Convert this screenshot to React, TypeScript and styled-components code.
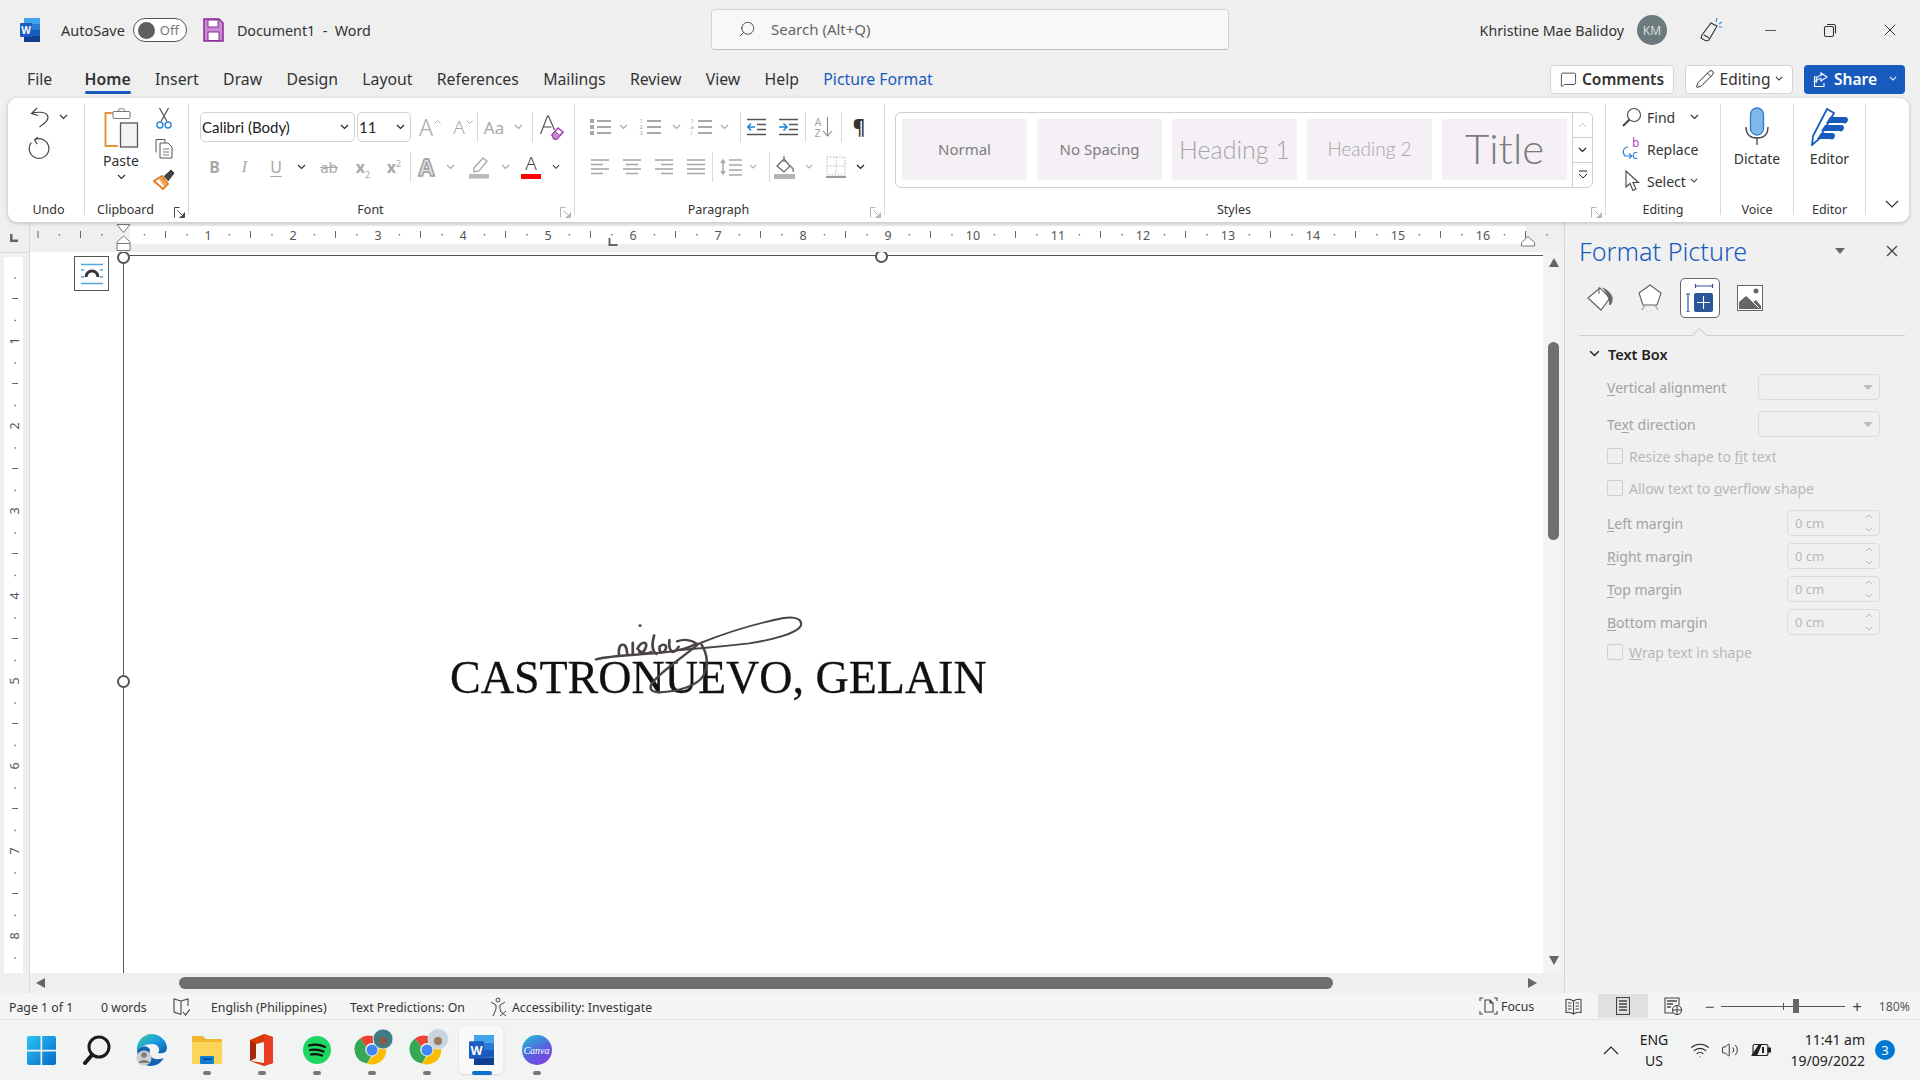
import React from 'react';
import styled, { createGlobalStyle } from 'styled-components';
import { Search, X, Minus, Pencil, MessageSquare, Wifi, Volume2 } from 'lucide-react';

const UI = `"Noto Sans", "Open Sans", Arial, sans-serif`;
const BLUE = '#185abd';
const DIM = '#a8a8a8';

const GlobalStyle = createGlobalStyle`
	html, body {
		margin: 0;
		width: 1920px;
		height: 1080px;
		overflow: hidden;
	}
	#root {
		width: 1920px;
		height: 1080px;
	}
`;

const Chev = ({ size = 9 }: { size?: number }) => (
	<svg width={size} height={size * 0.67} viewBox="0 0 9 6" fill="none" stroke="currentColor" strokeWidth="1.2">
		<path d="M1 1l3.5 3.5L8 1" />
	</svg>
);

const Launcher = ({ dark }: { dark?: boolean }) => (
	<LauncherBox $dark={dark}>
		<svg width="11" height="11" viewBox="0 0 11 11" fill="none" stroke="currentColor" strokeWidth="1">
			<path d="M.5 10.500V.5h5M10.500 5.500v5h-5M3.500 3.500l6 6M6.500 9.500h3v-3" />
		</svg>
	</LauncherBox>
);

const LinesIcon = ({ kind }: { kind: 'left' | 'center' | 'right' | 'justify' }) => {
	const rows = {
		left: [[1, 19], [1, 13], [1, 19], [1, 13]],
		center: [[1, 19], [4, 16], [1, 19], [4, 16]],
		right: [[1, 19], [7, 19], [1, 19], [7, 19]],
		justify: [[1, 19], [1, 19], [1, 19], [1, 19]],
	}[kind];
	return (
		<svg width="20" height="18" viewBox="0 0 20 18" stroke={DIM} strokeWidth="1.6">
			{rows.map((r, i) => (
				<line key={i} x1={r[0]} x2={r[1]} y1={2 + i * 4.5} y2={2 + i * 4.5} />
			))}
		</svg>
	);
};

const ListIcon = ({ marks }: { marks: string[] }) => (
	<ListGrid>
		{marks.map((m, i) => (
			<React.Fragment key={i}>
				<ListMark $square={m === ''}>{m}</ListMark>
				<ListBar />
			</React.Fragment>
		))}
	</ListGrid>
);

const IndentIcon = ({ out }: { out?: boolean }) => (
	<svg width="20" height="18" viewBox="0 0 20 18" fill="none">
		<path d="M0 1.500h19M10 6.500h9M10 11.500h9M0 16.500h19" stroke="#555" strokeWidth="1.5" />
		<path d={out ? 'M8 9H1M4 5.500L.8 9 4 12.500' : 'M0 9h7M4.500 5.500L8 9l-3.500 3.500'} stroke="#1a86d0" strokeWidth="1.5" />
	</svg>
);

const WordLogo = ({ w = 20, h = 24 }: { w?: number; h?: number }) => (
	<svg width={w} height={h} viewBox="0 0 20 24">
		<rect x="4" y="0" width="16" height="6" fill="#41a5ee" />
		<rect x="4" y="6" width="16" height="6" fill="#2b7cd3" />
		<rect x="4" y="12" width="16" height="6" fill="#185abd" />
		<rect x="4" y="18" width="16" height="6" fill="#103f91" />
		<rect x="0" y="5" width="12" height="14" rx="1" fill="#1a5cc0" />
		<text x="6" y="16" fontSize="10" fontWeight="700" fill="#fff" textAnchor="middle" fontFamily={UI}>W</text>
	</svg>
);

const Signature = () => (
	<SignatureSvg viewBox="0 0 1568 390" preserveAspectRatio="none" fill="none" stroke="#4a4442" strokeLinecap="round" strokeLinejoin="round">
		<path strokeWidth="7" d="M460 208C500 196 560 196 630 188C665 184 700 178 722 160C710 150 690 146 672 154" />
		<path strokeWidth="5.500" d="M735 158C800 128 880 100 950 84C985 78 1000 90 995 108C985 130 920 150 860 160C815 166 780 170 740 174C720 176 700 178 680 180" />
		<path strokeWidth="6.500" d="M735 162C750 190 755 225 740 258C725 285 680 305 625 307C600 306 596 292 612 272C640 235 695 195 730 160" />
		<path strokeWidth="7" d="M520 194C518 175 522 164 530 164C540 164 540 180 542 194M556 158V194M568 176C580 150 596 156 590 172C585 190 572 192 572 180C580 194 595 192 604 186M612 136C606 160 604 182 618 192M626 170C638 158 648 166 640 182C634 192 624 186 626 172M652 150C650 165 652 180 660 186C666 188 672 176 676 170" />
		<circle cx="575" cy="107" r="4" fill="#4a4442" stroke="none" />
	</SignatureSvg>
);

const HRulerSvg = () => {
	const marks: React.ReactNode[] = [];
	for (let i = -4; i <= 67; i++) {
		const x = 123 + i * 21.25;
		if (i === 0) continue;
		if (i % 4 === 0 && i > 0) {
			marks.push(
				<text key={i} x={x} y="240" fontSize="12.5" textAnchor="middle" fill="#555" fontFamily={UI}>{i / 4}</text>,
			);
		} else if (i % 2 === 0) {
			marks.push(<line key={i} x1={x} x2={x} y1="231" y2="238" stroke="#666" />);
		} else {
			marks.push(<rect key={i} x={x - 0.5} y="234" width="1.4" height="1.4" fill="#666" />);
		}
	}
	return (
		<svg width="1534" height="30" viewBox="30 222 1534 30">
			<rect x="130" y="226" width="1396" height="18" fill="#fff" />
			{marks}
			<path d="M117 224.500h13l-6.500 8zM123.500 236l6.500 6v8.500h-13V242zM117 243.500h13" fill="#fff" stroke="#777" />
			<path d="M1528 236.500l6.500 6v3.500h-13v-3.500z" fill="#fff" stroke="#777" />
			<path d="M609.500 238v7h8" fill="none" stroke="#666" strokeWidth="2" />
		</svg>
	);
};

const VRulerSvg = () => {
	const marks: React.ReactNode[] = [];
	for (let i = 1; i <= 33; i++) {
		const y = 256 + i * 21.25;
		if (i % 4 === 0) {
			marks.push(
				<text key={i} x="14.500" y={y} fontSize="12.5" textAnchor="middle" dominantBaseline="central" fill="#555" fontFamily={UI} transform={`rotate(-90 14.5 ${y})`}>{i / 4}</text>,
			);
		} else if (i % 2 === 0) {
			marks.push(<line key={i} x1="12" x2="18" y1={y} y2={y} stroke="#666" />);
		} else {
			marks.push(<rect key={i} x="14.500" y={y} width="1.4" height="1.4" fill="#666" />);
		}
	}
	return (
		<svg width="29" height="721" viewBox="0 252 29 721">
			<rect x="4" y="257" width="19" height="716" fill="#fff" />
			{marks}
		</svg>
	);
};

const SpinBox = ({ value = '0 cm' }: { value?: string }) => (
	<Spin>
		<span>{value}</span>
		<SpinArrows>
			<svg width="8" height="22" viewBox="0 0 8 22" fill="none" stroke="#b5b5b5">
				<path d="M1 6l3-3 3 3M1 16l3 3 3-3" />
			</svg>
		</SpinArrows>
	</Spin>
);

const CaretMark = ({ down }: { down?: boolean }) => (
	<CaretBox width="7" height="4" viewBox="0 0 7 4" fill="none" stroke={DIM}>
		<path d={down ? 'M.5.5l3 3 3-3' : 'M.5 3.500l3-3 3 3'} />
	</CaretBox>
);

const ChromeMark = ({ tint, face }: { tint: string; face: string }) => (
	<svg width="28" height="28" viewBox="0 0 28 28" overflow="visible">
		<path d="M14 0a14 14 0 0 1 12 7H14a7 7 0 0 0-6 3.500L2 2.500A14 14 0 0 1 14 0z" fill="#ea4335" />
		<path d="M2 2.500l6 8a7 7 0 0 0 5 10L9 27.500A14 14 0 0 1 2 2.500z" fill="#34a853" />
		<path d="M26 7a14 14 0 0 1-17 20.500l5-7a7 7 0 0 0 6-10z" fill="#fbbc04" />
		<circle cx="14" cy="14" r="5.500" fill="#4285f4" />
		<circle cx="25" cy="3" r="10" fill={tint} stroke="#d5e2ea" />
		<circle cx="25" cy="5" r="4" fill={face} />
	</svg>
);

const tabs = ['File', 'Home', 'Insert', 'Draw', 'Design', 'Layout', 'References', 'Mailings', 'Review', 'View', 'Help'];

export default function App() {
	return (
		<>
			<GlobalStyle />
			<Page>
				<TitleBar>
					<TitleLeft>
						<WordLogo />
						<AutoSave>AutoSave</AutoSave>
						<Toggle>
							<ToggleKnob />
							<span>Off</span>
						</Toggle>
						<SaveIcon width="21" height="24" viewBox="0 0 21 24">
							<path d="M1 1h15l4 4v18H1z" fill="#c98bd0" stroke="#8a2d96" strokeWidth="1.5" />
							<rect x="5" y="2" width="10" height="7" fill="#fff" stroke="#8a2d96" />
							<rect x="5" y="14" width="11" height="8.500" fill="#fff" stroke="#8a2d96" />
						</SaveIcon>
						<DocName>Document1&nbsp; -&nbsp; Word</DocName>
					</TitleLeft>
					<SearchBox>
						<SearchGlyph><Search size={18} strokeWidth={1.2} color="#444" /></SearchGlyph>
						<span>Search (Alt+Q)</span>
					</SearchBox>
					<TitleRight>
						<UserName>Khristine Mae Balidoy</UserName>
						<Avatar>KM</Avatar>
						<CoachIcon width="24" height="28" viewBox="0 0 24 28" fill="none" stroke="#333" strokeWidth="1.1">
							<path d="M12 7l6 3-8 14-3 1-5-3 1-3z" />
							<path d="M5 19l5 3" />
							<path d="M17 6l1-4M20 8l3-2M20 11h3" stroke="#2b88d8" />
						</CoachIcon>
						<WinBtn><Minus size={17} strokeWidth={1.2} /></WinBtn>
						<WinBtn>
							<svg width="16" height="16" viewBox="0 0 16 16" fill="none" stroke="#333" strokeWidth="1.1">
								<rect x="2.500" y="4.500" width="9" height="10" rx="1.500" />
								<path d="M5 2.500h6.500a2 2 0 0 1 2 2v7" />
							</svg>
						</WinBtn>
						<WinBtn><X size={20} strokeWidth={1.2} /></WinBtn>
					</TitleRight>
				</TitleBar>

				<TabRow>
					{tabs.map((t) => (
						<Tab key={t} $active={t === 'Home'} $file={t === 'File'}>{t}</Tab>
					))}
					<Tab $context>Picture Format</Tab>
					<TabActions>
						<PillButton $w={124}>
							<MessageSquare size={17} strokeWidth={1.2} />
							<strong>Comments</strong>
						</PillButton>
						<PillButton $w={108}>
							<Pencil size={20} strokeWidth={1.2} />
							<span>Editing</span>
							<Chev size={8} />
						</PillButton>
						<ShareButton>
							<ShareMain>
								<svg width="16" height="17" viewBox="0 0 16 17" fill="none" stroke="#fff" strokeWidth="1.1">
									<path d="M8 2l6 4-6 4V7.500C5 7.500 3.500 9 3 12 2.500 8 4 4.500 8 4.500z" />
									<path d="M11 12v3.500H1.500V6H4" />
								</svg>
								<strong>Share</strong>
							</ShareMain>
							<Chev size={8} />
						</ShareButton>
					</TabActions>
				</TabRow>

				<Ribbon>
					<Group $w={77}>
						<GroupBody>
							<UndoRow>
								<Slot $w={24} $c="#444">
									<svg width="20" height="21" viewBox="0 0 20 21" fill="none" stroke="#444" strokeWidth="1.2">
										<path d="M7 1L1.500 6.500 8 8.500M1.500 6.500C6 5 15 4 17.500 8.500c2 4-2 7-8 11.500" />
									</svg>
								</Slot>
								<Slot $w={22} $c="#333"><Chev /></Slot>
							</UndoRow>
							<UndoRow $second>
								<Slot $w={24}>
									<svg width="24" height="24" viewBox="0 0 22 22" fill="none" stroke="#444" strokeWidth="1.1">
										<path d="M6 3.500A9 9 0 1 1 3 6M9 1L6 3.500 8.500 7.500" />
									</svg>
								</Slot>
							</UndoRow>
						</GroupBody>
						<GroupLabel $shift={5}>Undo</GroupLabel>
					</Group>

					<Group $w={104}>
						<ClipBody>
							<PasteCol>
								<svg width="35" height="40" viewBox="0 0 35 40" fill="none">
									<path d="M10 5H1.500v33H14" stroke="#e8963a" strokeWidth="2" />
									<path d="M27 5h-3V9" stroke="#e8963a" strokeWidth="1" />
									<rect x="9" y="3.500" width="17" height="7" rx="1" fill="#fff" stroke="#777" />
									<path d="M14 3.500a3.500 3 0 0 1 7 0" stroke="#777" />
									<rect x="16.500" y="15" width="17" height="24" fill="#f3f3f3" stroke="#555" strokeWidth="1.3" />
								</svg>
								<PasteLabel>Paste</PasteLabel>
								<Chev />
							</PasteCol>
							<ClipCol>
								<svg width="16" height="22" viewBox="0 0 16 22" fill="none" stroke="#444" strokeWidth="1.100">
									<path d="M5 14.500L12.500 1M11 14.500L3.500 1" />
									<circle cx="4" cy="18" r="3" stroke="#2b88d8" strokeWidth="1.400" />
									<circle cx="12" cy="18" r="3" stroke="#2b88d8" strokeWidth="1.400" />
								</svg>
								<svg width="20" height="21" viewBox="0 0 20 21" fill="none" stroke="#555">
									<path d="M2 14.500V1.500h9v3" />
									<path d="M6 5h8l4 4v11H6z" fill="#fff" />
									<path d="M9 11h6M9 14h6M9 17h6" stroke="#777" />
								</svg>
								<svg width="22" height="22" viewBox="0 0 22 22" fill="none">
									<path d="M1 13l8-5 6 8-5 5C7 18 4 16 1 13z" fill="#fff" stroke="#e27a1c" strokeWidth="1.800" />
									<path d="M6 11l3-2 5 7-3 2z" fill="#f0a050" />
									<path d="M11 8.500l7-6.500 3 3-6 8" fill="#444" stroke="#333" />
								</svg>
							</ClipCol>
						</ClipBody>
						<GroupLabel $launcher>Clipboard</GroupLabel>
						<Launcher dark />
					</Group>

					<Group $w={386}>
						<FontBody>
							<FontRow>
								<Combo $w={155}>
									<ComboText>Calibri (Body)</ComboText>
									<Chev />
								</Combo>
								<Combo $w={54} $gap>
									<ComboText>11</ComboText>
									<Chev />
								</Combo>
								<Slot $w={38}><BigA>A</BigA><CaretMark /></Slot>
								<Slot $w={28}><BigA $small>A</BigA><CaretMark down /></Slot>
								<Rule />
								<Slot $w={32}><CaseA>Aa</CaseA></Slot>
								<Slot $w={16} $c={DIM}><Chev /></Slot>
								<Slot $w={6} />
								<Rule />
								<Slot $w={38}>
									<svg width="26" height="26" viewBox="0 0 26 26" fill="none">
										<path d="M1.500 20L8.500 2h1l6 14M4.500 13h8" stroke="#444" strokeWidth="1.100" />
										<path d="M13 21l6-7 5 4-6 7h-3z" fill="#fff" stroke="#9c3fb0" strokeWidth="1.600" />
										<path d="M13 21l3-3.500 5 4-3 3.500h-3z" fill="#c98bd0" stroke="#9c3fb0" />
									</svg>
								</Slot>
							</FontRow>
							<FontRow $second>
								<Slot $w={29}><Glyph $bold>B</Glyph></Slot>
								<Slot $w={31}><Glyph $italic>I</Glyph></Slot>
								<Slot $w={32}><Glyph $under>U</Glyph></Slot>
								<Slot $w={18} $c="#333"><Chev /></Slot>
								<Slot $w={38}><Strike>ab</Strike></Slot>
								<Slot $w={30}><Glyph $bold>x<ScriptNum $low>2</ScriptNum></Glyph></Slot>
								<Slot $w={32}><Glyph $bold>x<ScriptNum>2</ScriptNum></Glyph></Slot>
								<Rule />
								<Slot $w={31}><OutlineA>A</OutlineA></Slot>
								<Slot $w={16} $c={DIM}><Chev /></Slot>
								<Slot $w={42}>
									<svg width="22" height="23" viewBox="0 0 22 23" fill="none" stroke={DIM} strokeWidth="1.300">
										<path d="M6 12L15 2l4 3-8 10-5 1z" />
										<rect x="1" y="18" width="20" height="4.500" fill="#b9b9b9" stroke="none" />
									</svg>
								</Slot>
								<Slot $w={10} $c={DIM}><Chev /></Slot>
								<Slot $w={42}>
									<RedA>A</RedA>
								</Slot>
								<Slot $w={8} $c="#333"><Chev /></Slot>
							</FontRow>
						</FontBody>
						<GroupLabel $launcher>Font</GroupLabel>
						<Launcher />
					</Group>

					<Group $w={310}>
						<ParaBody>
							<FontRow>
								<Slot $w={30}><ListIcon marks={['', '', '']} /></Slot>
								<Slot $w={16} $c={DIM}><Chev /></Slot>
								<Slot $w={38}><ListIcon marks={['1', '2', '3']} /></Slot>
								<Slot $w={14} $c={DIM}><Chev /></Slot>
								<Slot $w={36}><ListIcon marks={['1', 'a', 'i']} /></Slot>
								<Slot $w={10} $c={DIM}><Chev /></Slot>
								<Slot $w={11} />
								<Rule />
								<Slot $w={32}><IndentIcon out /></Slot>
								<Slot $w={32}><IndentIcon /></Slot>
								<Rule />
								<Slot $w={35}>
									<SortLetters><span>A</span><span>Z</span></SortLetters>
									<svg width="11" height="22" viewBox="0 0 11 22" fill="none">
										<path d="M5.500 1v19M1 15l4.500 5 4.500-5" stroke="#888" strokeWidth="1.100" />
									</svg>
								</Slot>
								<Rule />
								<Slot $w={34}><Pilcrow>¶</Pilcrow></Slot>
							</FontRow>
							<FontRow $second>
								<Slot $w={30}><LinesIcon kind="left" /></Slot>
								<Slot $w={34}><LinesIcon kind="center" /></Slot>
								<Slot $w={30}><LinesIcon kind="right" /></Slot>
								<Slot $w={33}><LinesIcon kind="justify" /></Slot>
								<Rule />
								<Slot $w={36}>
									<svg width="23" height="20" viewBox="0 0 23 20" fill="none" stroke={DIM} strokeWidth="1.500">
										<path d="M3 4v12M1 6l2-3 2 3M1 14l2 3 2-3M9 3h13M9 8h13M9 13h13M9 18h13" />
									</svg>
								</Slot>
								<Slot $w={8} $c={DIM}><Chev size={8} /></Slot>
								<Slot $w={12} />
								<Rule />
								<Slot $w={30}>
									<svg width="22" height="24" viewBox="0 0 22 24" fill="none">
										<path d="M3 11l7-7 6 7-6 6z" stroke="#666" strokeWidth="1.200" fill="#fff" />
										<path d="M10 1v6M16 11c3 2 4 4 3 6" stroke="#888" strokeWidth="1.600" />
										<rect x="0" y="19" width="21" height="5" fill="#b5b5b5" />
									</svg>
								</Slot>
								<Slot $w={18} $c={DIM}><Chev size={8} /></Slot>
								<Slot $w={36}>
									<svg width="20" height="23" viewBox="0 0 20 23" fill="none" stroke="#b5b5b5" strokeWidth="1" strokeDasharray="1.500 1.500">
										<rect x="1" y="1" width="18" height="18" />
										<path d="M10 1v18M1 10h18" />
										<rect x="0" y="20" width="20" height="2" fill="#9a9a9a" stroke="none" />
									</svg>
								</Slot>
								<Slot $w={12} $c="#222"><Chev /></Slot>
							</FontRow>
						</ParaBody>
						<GroupLabel $launcher>Paragraph</GroupLabel>
						<Launcher />
					</Group>

					<Group $w={721}>
						<StylesBody>
							<Gallery>
								<StyleItem $size={15}>Normal</StyleItem>
								<StyleItem $size={15}>No Spacing</StyleItem>
								<StyleItem $size={25} $light>Heading 1</StyleItem>
								<StyleItem $size={19} $light>Heading 2</StyleItem>
								<StyleItem $size={42} $light $dark>Title</StyleItem>
								<GalleryScroll>
									<ScrollCell $c="#c4c4c4"><svg width="9" height="6" viewBox="0 0 9 6" fill="none" stroke="currentColor"><path d="M1 5l3.500-3.500L8 5" /></svg></ScrollCell>
									<ScrollCell $c="#222"><Chev /></ScrollCell>
									<ScrollCell $c="#222">
										<svg width="10" height="10" viewBox="0 0 10 10" fill="none" stroke="currentColor"><path d="M1 1h8M1 4l4 4 4-4" /></svg>
									</ScrollCell>
								</GalleryScroll>
							</Gallery>
						</StylesBody>
						<GroupLabel $launcher>Styles</GroupLabel>
						<Launcher />
					</Group>

					<Group $w={115}>
						<EditBody>
							<EditRow>
								<Slot $w={22}>
									<svg width="20" height="20" viewBox="0 0 20 20" fill="none" stroke="#444" strokeWidth="1.100">
										<circle cx="12" cy="8" r="6.500" />
										<path d="M7.500 12.500L1 19" strokeWidth="2" />
									</svg>
								</Slot>
								<EditText>Find</EditText>
								<EditChev $gap={15}><Chev /></EditChev>
							</EditRow>
							<EditRow>
								<Slot $w={22}>
									<ReplaceMark>
										<ReplaceB>b</ReplaceB>
										<ReplaceC>c</ReplaceC>
										<svg width="14" height="14" viewBox="0 0 14 14" fill="none" stroke="#2b88d8" strokeWidth="1.100">
											<path d="M6 1C1 1 0 7 3 10h7M7 7.500l3 2.500-3 2.500" />
										</svg>
									</ReplaceMark>
								</Slot>
								<EditText>Replace</EditText>
							</EditRow>
							<EditRow>
								<Slot $w={22}>
									<svg width="16" height="22" viewBox="0 0 16 22" fill="#fff" stroke="#444" strokeWidth="1.100">
										<path d="M2 1v16l4-3.500 3 7 3-1.500-3-6.500h5.500z" />
									</svg>
								</Slot>
								<EditText>Select</EditText>
								<EditChev $gap={4}><Chev size={8} /></EditChev>
							</EditRow>
						</EditBody>
						<GroupLabel>Editing</GroupLabel>
					</Group>

					<Group $w={73}>
						<BigBody>
							<svg width="24" height="39" viewBox="0 0 24 39" fill="none">
								<rect x="5.500" y="1" width="13" height="27" rx="6.500" fill="#7fb9e8" stroke="#2b7cd3" strokeWidth="1.300" />
								<path d="M1 20c0 7 4 11 11 11s11-4 11-11" stroke="#444" strokeWidth="1.300" />
								<path d="M12 31v7" stroke="#444" strokeWidth="1.300" />
							</svg>
							<BigLabel>Dictate</BigLabel>
						</BigBody>
						<GroupLabel>Voice</GroupLabel>
					</Group>

					<Group $w={72}>
						<BigBody>
							<svg width="40" height="39" viewBox="0 0 40 39" fill="none">
								<path d="M17 2l7 4L9 32l-7 6 1-9z" fill="#fff" stroke={BLUE} strokeWidth="1.800" />
								<path d="M20 10h16a3 3 0 0 1-3 6H16zM15 18h17a3 3 0 0 1-3 6H11zM11 26h12a3 3 0 0 1-3 6H7z" fill={BLUE} />
							</svg>
							<BigLabel>Editor</BigLabel>
						</BigBody>
						<GroupLabel>Editor</GroupLabel>
					</Group>

					<Collapse>
						<svg width="14" height="9" viewBox="0 0 14 9" fill="none" stroke="#333" strokeWidth="1.200">
							<path d="M1 1l6 6 6-6" />
						</svg>
					</Collapse>
				</Ribbon>

				<Workspace>
					<DocColumn>
						<RulerRow>
							<RulerCorner>
								<svg width="8" height="8" viewBox="0 0 8 8" fill="none" stroke="#666" strokeWidth="2.500">
									<path d="M1.250 0v6.750H8" />
								</svg>
							</RulerCorner>
							<HRulerSvg />
						</RulerRow>
						<DocBody>
							<VRulerCol><VRulerSvg /></VRulerCol>
							<DocPage>
								<FrameTop />
								<FrameLeft />
								<Handle $x={93} $y={4} />
								<Handle $x={851} $y={3} />
								<Handle $x={93} $y={428} />
								<LayoutButton>
									<svg width="22" height="22" viewBox="0 0 22 22">
										<path d="M0 1.500h22M0 20.500h22M0 7h3M19 7h3M0 14h3M19 14h3" stroke="#55a7dc" strokeWidth="1.600" />
										<path d="M5 14a6 6 0 0 1 12 0" fill="none" stroke="#333" strokeWidth="3" />
									</svg>
								</LayoutButton>
								<SignedName>CASTRONUEVO, GELAIN</SignedName>
								<Signature />
							</DocPage>
							<VScroll>
								<ArrowUp />
								<VThumb />
								<ArrowDown />
							</VScroll>
						</DocBody>
						<HScroll>
							<HScrollLead>
								<ArrowLeft />
							</HScrollLead>
							<HThumb />
							<ArrowRight />
						</HScroll>
					</DocColumn>

					<Panel>
						<PanelHead>
							<PanelTitle>Format Picture</PanelTitle>
							<PanelMenu />
							<PanelClose><X size={18} strokeWidth={1.800} color="#444" /></PanelClose>
						</PanelHead>
						<PanelTabs>
							<PanelTab>
								<svg width="27" height="27" viewBox="0 0 27 27" fill="none">
									<path d="M1 13L13 3l10 10-9 12z" fill="#fff" stroke="#666" strokeWidth="1.200" />
									<path d="M12 2v7M16 3c6 3 10 8 9 12 0 2-1 4-2 5-1-3 0-5-3-10" fill="#666" stroke="#666" />
								</svg>
							</PanelTab>
							<PanelTab>
								<svg width="26" height="28" viewBox="0 0 26 28" fill="none" stroke="#666" strokeWidth="1.200">
									<path d="M13 1l11 8-4 12H6L2 9z" fill="#fff" />
									<path d="M5 26c1-3 2-4 4-5h8c2 1 3 2 4 5" stroke="#aaa" strokeWidth="1.400" />
								</svg>
							</PanelTab>
							<PanelTab $active>
								<svg width="28" height="28" viewBox="0 0 28 28" fill="none">
									<path d="M9.500 2h17M9.500 0v4M26.500 0v4M0 10h4M0 28h4M2 10v18" stroke="#2b579a" strokeWidth="1.200" />
									<rect x="8" y="9" width="19" height="19" rx="2" fill="#2b579a" />
									<path d="M17.500 12v13M11 18.500h13" stroke="#fff" strokeWidth="1.100" />
								</svg>
							</PanelTab>
							<PanelTab>
								<svg width="26" height="26" viewBox="0 0 26 26">
									<rect x=".5" y=".5" width="25" height="25" fill="#fff" stroke="#666" />
									<circle cx="19" cy="6" r="2.500" fill="#666" />
									<path d="M2 24V17l7-6 7 6 3-2 5 6v3z" fill="#666" />
									<path d="M10 11l12 12" stroke="#fff" />
								</svg>
							</PanelTab>
							<TabNotch />
						</PanelTabs>
						<SectionHead>
							<Chev size={11} />
							<span>Text Box</span>
						</SectionHead>
						<FormRow $mt={10}>
							<FieldLabel><u>V</u>ertical alignment</FieldLabel>
							<SelectField><SelectCaret /></SelectField>
						</FormRow>
						<FormRow $mt={11}>
							<FieldLabel>Te<u>x</u>t direction</FieldLabel>
							<SelectField><SelectCaret /></SelectField>
						</FormRow>
						<CheckRow $mt={9}>
							<Check />
							<span>Resize shape to <u>f</u>it text</span>
						</CheckRow>
						<CheckRow $mt={12}>
							<Check />
							<span>Allow text to <u>o</u>verflow shape</span>
						</CheckRow>
						<FormRow $mt={12}>
							<FieldLabel><u>L</u>eft margin</FieldLabel>
							<SpinBox />
						</FormRow>
						<FormRow $mt={7}>
							<FieldLabel><u>R</u>ight margin</FieldLabel>
							<SpinBox />
						</FormRow>
						<FormRow $mt={7}>
							<FieldLabel><u>T</u>op margin</FieldLabel>
							<SpinBox />
						</FormRow>
						<FormRow $mt={7}>
							<FieldLabel><u>B</u>ottom margin</FieldLabel>
							<SpinBox />
						</FormRow>
						<CheckRow $mt={7}>
							<Check />
							<span><u>W</u>rap text in shape</span>
						</CheckRow>
					</Panel>
				</Workspace>

				<StatusBar>
					<StatusItem $w={92}>Page 1 of 1</StatusItem>
					<StatusItem $w={71}>0 words</StatusItem>
					<StatusItem $w={39}>
						<svg width="18" height="18" viewBox="0 0 18 18" fill="none" stroke="#444" strokeWidth="1.100">
							<path d="M9 3L2 1v13l7 2.500M9 3l7-2v7M9 3v13.500" />
							<path d="M11 14l2.500 3L18 11" />
						</svg>
					</StatusItem>
					<StatusItem $w={139}>English (Philippines)</StatusItem>
					<StatusItem $w={140}>Text Predictions: On</StatusItem>
					<StatusItem $w={22}>
						<svg width="18" height="20" viewBox="0 0 18 20" fill="none" stroke="#444" strokeWidth="1">
							<circle cx="8" cy="3" r="2" />
							<path d="M1 5l5 3v4l-3 7M15 5l-5 3v4l1 2M10 14l6 5M16 14l-6 5" />
						</svg>
					</StatusItem>
					<StatusItem $w={170}>Accessibility: Investigate</StatusItem>
					<StatusRight>
						<FocusItem>
							<svg width="19" height="18" viewBox="0 0 19 18" fill="none" stroke="#444" strokeWidth="1.100">
								<path d="M1 4V1h3M15 1h3v3M1 14v3h3M15 17h3v-3" />
								<path d="M6 3h5l3 3v9H6zM11 3v3h3" />
							</svg>
							<span>Focus</span>
						</FocusItem>
						<ViewButton>
							<svg width="17" height="17" viewBox="0 0 17 17" fill="none" stroke="#444" strokeWidth="1.100">
								<path d="M8.500 3C6 1 3 1 1 1.500v13c2-.5 5-.5 7.500 1.500 2.500-2 5.500-2 7.500-1.500v-13C14 1 11 1 8.500 3zM8.500 3v13M3 5h3.500M3 8h3.500M3 11h3.500M10.500 5H14M10.500 8H14M10.500 11H14" />
							</svg>
						</ViewButton>
						<ViewButton $active>
							<svg width="14" height="18" viewBox="0 0 14 18" fill="none" stroke="#444" strokeWidth="1.100">
								<rect x=".5" y=".5" width="13" height="17" />
								<path d="M3 4h8M3 7h8M3 10h8M3 13h8" strokeWidth="1.400" />
							</svg>
						</ViewButton>
						<ViewButton>
							<svg width="18" height="18" viewBox="0 0 18 18" fill="none" stroke="#444" strokeWidth="1.100">
								<path d="M9 16H1V1h14v7" />
								<path d="M3 4h10M3 7h6M3 10h4" strokeWidth="1.400" />
								<circle cx="13" cy="13" r="4.500" />
								<path d="M8.500 13h9M13 8.500v9" />
							</svg>
						</ViewButton>
						<ZoomMark $w={23}>−</ZoomMark>
						<ZoomTrack>
							<ZoomTick />
							<ZoomThumb />
						</ZoomTrack>
						<ZoomMark $w={24}>+</ZoomMark>
						<ZoomPct>180%</ZoomPct>
					</StatusRight>
				</StatusBar>

				<Taskbar>
					<TaskSlot>
						<svg width="29" height="29" viewBox="0 0 29 29">
							<defs>
								<linearGradient id="win" x1="0" y1="0" x2="1" y2="1">
									<stop offset="0" stopColor="#2cc4f4" />
									<stop offset="1" stopColor="#0669c9" />
								</linearGradient>
							</defs>
							<path d="M0 2a2 2 0 0 1 2-2h11.500v13.800H0zM15.200 0H27a2 2 0 0 1 2 2v11.800H15.200zM0 15.500h13.500V29H2a2 2 0 0 1-2-2zM15.200 15.500H29V27a2 2 0 0 1-2 2H15.200z" fill="url(#win)" />
						</svg>
					</TaskSlot>
					<TaskSlot>
						<svg width="29" height="30" viewBox="0 0 29 30" fill="none" stroke="#1c1c1c" strokeWidth="3">
							<circle cx="17" cy="12" r="10" />
							<path d="M10 20l-7 8" strokeLinecap="round" strokeWidth="4" />
						</svg>
					</TaskSlot>
					<TaskSlot>
						<svg width="31" height="32" viewBox="0 0 31 32">
							<defs>
								<linearGradient id="edge" x1="0" y1="0" x2="1" y2="1">
									<stop offset="0" stopColor="#3ad08c" />
									<stop offset=".5" stopColor="#1b9de2" />
									<stop offset="1" stopColor="#0c59a4" />
								</linearGradient>
							</defs>
							<path d="M15.500 0C24 0 31 7 31 14c0 5-6 6-9 5 3-4 0-9-6-9C9 10 4 13 1 17 0 8 7 0 15.500 0z" fill="url(#edge)" />
							<path d="M1 17c4-6 11-6 13-1-2 6 3 10 10 9 2 0 4-1 4-1-3 5-8 8-13 8C7 32 2 26 1 17z" fill="#1465b4" />
							<circle cx="8" cy="24" r="7.500" fill="#cfcfcf" />
							<circle cx="8" cy="21" r="2.800" fill="#7e7e7e" />
							<path d="M2.500 29c1-4 10-4 11 0z" fill="#7e7e7e" />
						</svg>
					</TaskSlot>
					<TaskSlot $dot>
						<svg width="30" height="30" viewBox="0 0 30 30">
							<path d="M0 2a1 1 0 0 1 1-1h10l3 3h15a1 1 0 0 1 1 1v4H0z" fill="#f2b72e" />
							<path d="M0 7h30v21a1 1 0 0 1-1 1H1a1 1 0 0 1-1-1z" fill="#fdd55a" />
							<rect x="8" y="21" width="14" height="8" rx="1" fill="#0f7fd3" />
							<rect x="11" y="23.500" width="8" height="1.500" fill="#083f78" />
						</svg>
					</TaskSlot>
					<TaskSlot $dot>
						<OfficeSvg width="24" height="32" viewBox="0 0 24 32">
							<path d="M1 6L15 0l9 3v26l-9 3-14-5 14 2V8L7 10v14l-6 3z" fill="#d83b01" />
							<path d="M15 0l9 3v26l-9 3z" fill="#ea3e23" />
							<path d="M1 27V6l6 4v14z" fill="#a5290f" />
						</OfficeSvg>
					</TaskSlot>
					<TaskSlot $dot>
						<svg width="28" height="28" viewBox="0 0 28 28" fill="none">
							<circle cx="14" cy="14" r="14" fill="#1ed760" />
							<path d="M6 9.500c6-1.500 11-1 16 1.500M7 14c5-1 9-.5 13.500 1.500M8 18.500c4-.8 7.500-.5 11 1" stroke="#111" strokeWidth="2.200" strokeLinecap="round" />
						</svg>
					</TaskSlot>
					<TaskSlot $dot>
						<ChromeMark tint="#3f7d86" face="#8c5a4a" />
					</TaskSlot>
					<TaskSlot $dot>
						<ChromeMark tint="#c8d3e0" face="#9a7a5c" />
					</TaskSlot>
					<TaskSlot $active>
						<WordLogo w={29} h={30} />
					</TaskSlot>
					<TaskSlot $dot>
						<CanvaBadge>Canva</CanvaBadge>
					</TaskSlot>
					<Tray>
						<TraySlot $w={42}>
							<svg width="16" height="9" viewBox="0 0 16 9" fill="none" stroke="#222" strokeWidth="1.100">
								<path d="M1 8l7-7 7 7" />
							</svg>
						</TraySlot>
						<LangBlock>ENG<br />US</LangBlock>
						<TraySlot $w={30} $ml={9}><Wifi size={20} strokeWidth={1.300} color="#222" /></TraySlot>
						<TraySlot $w={30}><Volume2 size={18} strokeWidth={1.200} color="#222" /></TraySlot>
						<TraySlot $w={30}>
							<svg width="21" height="14" viewBox="0 0 21 14" fill="none" stroke="#222" strokeWidth="1.100">
								<rect x="3" y="1.500" width="15" height="11" rx="2" />
								<path d="M18 5h2.500v4H18z" fill="#222" />
								<path d="M1 13L9 1h3L7 13z" fill="#222" stroke="none" />
								<path d="M13 4v6" strokeWidth="2" />
							</svg>
						</TraySlot>
						<Clock>
							<span>11:41 am</span>
							<span>19/09/2022</span>
						</Clock>
						<NotifyBadge>3</NotifyBadge>
					</Tray>
				</Taskbar>
			</Page>
		</>
	);
}

const Page = styled.div`
	width: 1920px;
	height: 1080px;
	display: flex;
	flex-direction: column;
	overflow: hidden;
	background: #efefef;
	font-family: ${UI};
	color: #333;
`;

const TitleBar = styled.div`
	display: flex;
	align-items: center;
	height: 60px;
	flex: none;
`;

const TitleLeft = styled.div`
	display: flex;
	align-items: center;
	width: 711px;
	padding-left: 20px;
	box-sizing: border-box;
`;

const AutoSave = styled.span`
	margin-left: 21px;
	font-size: 14.5px;
`;

const Toggle = styled.div`
	display: flex;
	align-items: center;
	justify-content: space-between;
	width: 54px;
	height: 24px;
	margin-left: 8px;
	padding: 0 7px 0 4px;
	box-sizing: border-box;
	border: 1px solid #555;
	border-radius: 12px;
	background: #fff;
	font-size: 13px;
	color: #777;
`;

const ToggleKnob = styled.span`
	width: 17px;
	height: 17px;
	border-radius: 50%;
	background: #5f5f5f;
`;

const SaveIcon = styled.svg`
	margin-left: 16px;
`;

const DocName = styled.span`
	margin-left: 13px;
	font-size: 14.3px;
`;

const SearchBox = styled.div`
	display: flex;
	align-items: center;
	gap: 15px;
	width: 518px;
	height: 41px;
	margin-bottom: 2px;
	padding-left: 26px;
	box-sizing: border-box;
	background: #f8f8f8;
	border: 1px solid #d6d6d6;
	border-bottom-color: #bdbdbd;
	border-radius: 4px;
	font-size: 15px;
	color: #666;
`;

const SearchGlyph = styled.span`
	display: flex;
	transform: scaleX(-1);
`;

const TitleRight = styled.div`
	display: flex;
	align-items: center;
	flex: 1;
	justify-content: flex-end;
`;

const UserName = styled.span`
	font-size: 14.2px;
`;

const Avatar = styled.div`
	display: flex;
	align-items: center;
	justify-content: center;
	width: 30px;
	height: 30px;
	margin-left: 13px;
	border-radius: 50%;
	background: #6b7a7c;
	color: #d8dcdc;
	font-size: 12px;
`;

const CoachIcon = styled.svg`
	margin: 0 17px 0 32px;
`;

const WinBtn = styled.div`
	display: flex;
	align-items: center;
	justify-content: center;
	width: 60px;
	height: 40px;
`;

const TabRow = styled.div`
	display: flex;
	align-items: center;
	gap: 24.3px;
	height: 38px;
	flex: none;
	padding: 0 15px 0 27px;
	box-sizing: border-box;
`;

const Tab = styled.div<{ $active?: boolean; $context?: boolean; $file?: boolean }>`
	position: relative;
	margin-right: ${(p) => (p.$file ? 8 : 0)}px;
	font-size: 15.8px;
	font-weight: ${(p) => (p.$active ? 600 : 400)};
	color: ${(p) => (p.$context ? BLUE : '#333')};
	&::after {
		content: '';
		display: ${(p) => (p.$active ? 'block' : 'none')};
		position: absolute;
		left: 0;
		right: 0;
		bottom: -4px;
		height: 3px;
		border-radius: 2px;
		background: ${BLUE};
	}
`;

const TabActions = styled.div`
	display: flex;
	align-items: center;
	gap: 11px;
	margin-left: auto;
`;

const PillButton = styled.div<{ $w: number }>`
	display: flex;
	align-items: center;
	justify-content: center;
	gap: 5px;
	width: ${(p) => p.$w}px;
	height: 29px;
	box-sizing: border-box;
	background: #fff;
	border: 1px solid #d4d4d4;
	border-radius: 4px;
	font-size: 15.5px;
	strong {
		font-weight: 600;
	}
`;

const ShareButton = styled.div`
	display: flex;
	align-items: center;
	width: 101px;
	height: 29px;
	padding-right: 8px;
	box-sizing: border-box;
	background: ${BLUE};
	border-radius: 4px;
	color: #fff;
	font-size: 15.5px;
`;

const ShareMain = styled.div`
	display: flex;
	align-items: center;
	gap: 5px;
	flex: 1;
	padding-left: 9px;
	strong {
		font-weight: 600;
	}
`;

const Ribbon = styled.div`
	display: flex;
	flex: none;
	height: 124px;
	margin: 0 11px 0 8px;
	padding-top: 6px;
	box-sizing: border-box;
	background: #fff;
	border-radius: 9px;
	box-shadow: 0 1px 4px rgba(0, 0, 0, 0.22);
	position: relative;
	z-index: 2;
`;

const Group = styled.div<{ $w: number }>`
	position: relative;
	display: flex;
	flex-direction: column;
	width: ${(p) => p.$w}px;
	height: 111px;
	flex: none;
	box-sizing: border-box;
	border-right: 1px solid #d8d8d8;
`;

const GroupBody = styled.div`
	flex: 1;
	padding-left: 20px;
`;

const GroupLabel = styled.div<{ $launcher?: boolean; $shift?: number }>`
	height: 16px;
	margin-bottom: -3px;
	padding-right: ${(p) => (p.$launcher ? 22 : 0)}px;
	padding-left: ${(p) => p.$shift ?? 0}px;
	text-align: center;
	font-size: 12.5px;
	line-height: 16px;
	color: #333;
`;

const LauncherBox = styled.span<{ $dark?: boolean }>`
	position: absolute;
	right: 3px;
	bottom: -3px;
	display: flex;
	color: ${(p) => (p.$dark ? '#444' : '#b5b5b5')};
`;

const Slot = styled.span<{ $w: number; $c?: string }>`
	position: relative;
	display: flex;
	align-items: center;
	justify-content: center;
	flex: none;
	width: ${(p) => p.$w}px;
	height: 100%;
	color: ${(p) => p.$c ?? '#555'};
`;

const CaretBox = styled.svg`
	margin: 0 0 11px 1px;
`;

const ListGrid = styled.span`
	display: grid;
	grid-template-columns: 6px 14px;
	grid-auto-rows: 6px;
	column-gap: 1px;
	align-items: center;
	height: 18px;
`;

const ListMark = styled.span<{ $square?: boolean }>`
	display: block;
	width: ${(p) => (p.$square ? '4px' : '6px')};
	height: ${(p) => (p.$square ? '4px' : '6px')};
	background: ${(p) => (p.$square ? DIM : 'transparent')};
	font-size: 6px;
	line-height: 6px;
	color: ${DIM};
`;

const ListBar = styled.span`
	display: block;
	height: 1.5px;
	background: ${DIM};
`;

const SortLetters = styled.span`
	display: flex;
	flex-direction: column;
	font-size: 11px;
	line-height: 11px;
	color: ${DIM};
`;

const UndoRow = styled.div<{ $second?: boolean }>`
	display: flex;
	align-items: center;
	height: 26px;
	margin-top: ${(p) => (p.$second ? 5 : 0)}px;
`;

const ClipBody = styled.div`
	display: flex;
	flex: 1;
	padding-left: 5px;
`;

const PasteCol = styled.div`
	display: flex;
	flex-direction: column;
	align-items: center;
	width: 62px;
	padding-top: 4px;
	color: #333;
`;

const PasteLabel = styled.span`
	margin: 3px 0 4px;
	font-size: 14px;
	line-height: 19px;
`;

const ClipCol = styled.div`
	display: flex;
	flex-direction: column;
	align-items: center;
	gap: 9px;
	width: 24px;
	padding-top: 3px;
`;

const FontBody = styled.div`
	flex: 1;
	padding: 8px 0 0 11px;
`;

const ParaBody = styled(FontBody)`
	padding-left: 10px;
`;

const FontRow = styled.div<{ $second?: boolean }>`
	display: flex;
	align-items: center;
	height: 30px;
	margin-top: ${(p) => (p.$second ? 10 : 0)}px;
`;

const Combo = styled.div<{ $w: number; $gap?: boolean }>`
	display: flex;
	align-items: center;
	justify-content: space-between;
	flex: none;
	width: ${(p) => p.$w}px;
	height: 30px;
	margin-left: ${(p) => (p.$gap ? 2 : 0)}px;
	padding: 0 5px 0 1px;
	box-sizing: border-box;
	border: 1px solid #d2d2d2;
	border-radius: 5px;
	color: #222;
`;

const ComboText = styled.span`
	font-size: 15px;
	font-family: "Lato", ${UI};
`;

const Rule = styled.span`
	flex: none;
	width: 1px;
	height: 30px;
	background: #d8d8d8;
`;

const BigA = styled.span<{ $small?: boolean }>`
	font-size: ${(p) => (p.$small ? 19 : 23)}px;
	font-weight: 300;
	color: ${DIM};
	line-height: 1;
`;

const CaseA = styled.span`
	font-size: 17px;
	color: ${DIM};
`;

const Glyph = styled.span<{ $bold?: boolean; $italic?: boolean; $under?: boolean }>`
	font-family: ${(p) => (p.$italic ? `"Liberation Serif", serif` : UI)};
	font-size: 16px;
	font-weight: ${(p) => (p.$bold ? 700 : 400)};
	font-style: ${(p) => (p.$italic ? 'italic' : 'normal')};
	text-decoration: ${(p) => (p.$under ? 'underline' : 'none')};
	color: ${DIM};
	text-underline-offset: 3px;
`;

const ScriptNum = styled.sup<{ $low?: boolean }>`
	font-size: 9px;
	font-weight: 400;
	vertical-align: ${(p) => (p.$low ? '-5px' : '6px')};
	line-height: 0;
`;

const Strike = styled.span`
	font-size: 15px;
	color: ${DIM};
	text-decoration: line-through;
`;

const OutlineA = styled.span`
	font-size: 23px;
	font-weight: 700;
	color: #e3e3e3;
	-webkit-text-stroke: 1.5px #a0a0a0;
`;

const RedA = styled.span`
	padding: 0 4px;
	margin-top: -2px;
	font-size: 19px;
	font-weight: 300;
	line-height: 21px;
	color: #444;
	border-bottom: 5px solid #f00;
`;

const Pilcrow = styled.span`
	font-size: 19px;
	font-weight: 700;
	color: #333;
`;

const ReplaceMark = styled.span`
	display: grid;
	grid-template-columns: 10px 9px;
	grid-template-rows: 10px 12px;
	width: 20px;
	height: 22px;
	svg {
		grid-column: 1 / 3;
		grid-row: 1 / 3;
		align-self: end;
	}
`;

const ReplaceB = styled.span`
	grid-column: 2;
	grid-row: 1;
	font-size: 12px;
	line-height: 10px;
	color: #b146c2;
`;

const ReplaceC = styled.span`
	grid-column: 2;
	grid-row: 2;
	font-size: 12px;
	line-height: 14px;
	color: #2b88d8;
`;

const StylesBody = styled.div`
	flex: 1;
	padding: 8px 0 0 10px;
`;

const Gallery = styled.div`
	display: flex;
	gap: 10px;
	width: 698px;
	height: 76px;
	padding: 6px 0 0 6px;
	box-sizing: border-box;
	border: 1px solid #cfcfcf;
	border-radius: 6px;
`;

const StyleItem = styled.div<{ $size: number; $light?: boolean; $dark?: boolean }>`
	display: flex;
	align-items: center;
	justify-content: center;
	flex: none;
	width: 125px;
	height: 61px;
	padding-bottom: ${(p) => (p.$dark ? 4 : 2)}px;
	box-sizing: border-box;
	background: #f4f0f6;
	font-family: ${(p) => (p.$light ? `"Lato", ${UI}` : UI)};
	font-weight: ${(p) => (p.$light ? 300 : 400)};
	font-size: ${(p) => p.$size}px;
	color: ${(p) => (p.$dark ? '#7a7a7a' : p.$light ? '#a5a5a5' : '#7d7d7d')};
`;

const GalleryScroll = styled.div`
	display: flex;
	flex-direction: column;
	flex: none;
	width: 19px;
	margin: -6px 0 0 -5px;
	border-left: 1px solid #cfcfcf;
`;

const ScrollCell = styled.div<{ $c: string }>`
	display: flex;
	align-items: center;
	justify-content: center;
	flex: 1;
	color: ${(p) => p.$c};
	& + & {
		border-top: 1px solid #cfcfcf;
	}
`;

const EditBody = styled.div`
	display: flex;
	flex-direction: column;
	gap: 6px;
	flex: 1;
	padding-left: 15px;
`;

const EditRow = styled.div`
	display: flex;
	align-items: center;
	height: 26px;
`;

const EditText = styled.span`
	margin-left: 4px;
	font-size: 14px;
`;

const EditChev = styled.span<{ $gap: number }>`
	display: flex;
	margin-left: ${(p) => p.$gap}px;
`;

const BigBody = styled.div`
	display: flex;
	flex-direction: column;
	align-items: center;
	flex: 1;
	padding-top: 3px;
`;

const BigLabel = styled.span`
	margin-top: 3px;
	font-size: 14px;
	line-height: 19px;
`;

const Collapse = styled.div`
	position: absolute;
	right: 10px;
	bottom: 13px;
	display: flex;
`;

const Workspace = styled.div`
	display: flex;
	flex: 1;
	min-height: 0;
`;

const DocColumn = styled.div`
	display: flex;
	flex-direction: column;
	width: 1564px;
	flex: none;
`;

const RulerRow = styled.div`
	display: flex;
	height: 30px;
	flex: none;
	border-bottom: 1px solid #d9d9d9;
	box-sizing: content-box;
	margin-bottom: -1px;
`;

const RulerCorner = styled.div`
	display: flex;
	align-items: flex-end;
	width: 30px;
	padding: 0 0 10px 10px;
	box-sizing: border-box;
	border-right: 1px solid #d9d9d9;
`;

const DocBody = styled.div`
	display: flex;
	flex: 1;
	min-height: 0;
`;

const VRulerCol = styled.div`
	flex: none;
	width: 30px;
	height: 721px;
	box-sizing: border-box;
	border-right: 1px solid #d9d9d9;
`;

const DocPage = styled.div`
	position: relative;
	flex: 1;
	overflow: hidden;
	background: #fff;
`;

const FrameTop = styled.div`
	position: absolute;
	left: 93px;
	right: 0;
	top: 3px;
	height: 1px;
	background: #555;
`;

const FrameLeft = styled.div`
	position: absolute;
	left: 93px;
	top: 4px;
	bottom: 0;
	width: 1px;
	background: #555;
`;

const Handle = styled.div<{ $x: number; $y: number }>`
	position: absolute;
	left: ${(p) => p.$x - 6}px;
	top: ${(p) => p.$y - 5}px;
	width: 13px;
	height: 13px;
	box-sizing: border-box;
	border: 2.5px solid #555;
	border-radius: 50%;
	background: #fff;
`;

const LayoutButton = styled.div`
	position: absolute;
	left: 44px;
	top: 4px;
	display: flex;
	align-items: center;
	justify-content: center;
	width: 35px;
	height: 35px;
	box-sizing: border-box;
	border: 1px solid #555;
	background: #fff;
`;

const SignedName = styled.div`
	position: absolute;
	left: 420px;
	top: 403px;
	font-family: "Liberation Serif", "Times New Roman", serif;
	font-size: 46px;
	line-height: 46px;
	white-space: nowrap;
	color: #111;
	-webkit-text-stroke: 0.3px #111;
	filter: blur(0.6px);
`;

const SignatureSvg = styled.svg`
	position: absolute;
	left: 390px;
	top: 338px;
	width: 600px;
	height: 130px;
	filter: blur(0.3px);
`;

const VScroll = styled.div`
	display: flex;
	flex-direction: column;
	align-items: center;
	flex: none;
	width: 21px;
	padding: 6px 0 8px;
	box-sizing: border-box;
	background: #f3f3f3;
`;

const ArrowUp = styled.span`
	width: 0;
	height: 0;
	border: 5.5px solid transparent;
	border-top: 0;
	border-bottom: 9px solid #666;
`;

const ArrowDown = styled.span`
	width: 0;
	height: 0;
	margin-top: auto;
	border: 5.5px solid transparent;
	border-bottom: 0;
	border-top: 9px solid #666;
`;

const VThumb = styled.div`
	width: 11px;
	height: 198px;
	margin-top: 75px;
	border-radius: 6px;
	background: #6f6f6f;
`;

const HScroll = styled.div`
	display: flex;
	align-items: center;
	flex: none;
	height: 20px;
	padding-right: 27px;
	box-sizing: border-box;
`;

const HScrollLead = styled.div`
	display: flex;
	align-items: center;
	width: 179px;
	height: 100%;
	padding-left: 36px;
	box-sizing: border-box;
	background: linear-gradient(to right, transparent 29px, #d9d9d9 29px, #d9d9d9 30px, transparent 30px);
`;

const ArrowLeft = styled.span`
	width: 0;
	height: 0;
	border: 5.5px solid transparent;
	border-left: 0;
	border-right: 9px solid #666;
`;

const ArrowRight = styled.span`
	width: 0;
	height: 0;
	margin-left: auto;
	border: 5.5px solid transparent;
	border-right: 0;
	border-left: 9px solid #666;
`;

const HThumb = styled.div`
	width: 1154px;
	height: 12px;
	border-radius: 6px;
	background: #6f6f6f;
`;

const Panel = styled.div`
	display: flex;
	flex-direction: column;
	flex: 1;
	box-sizing: border-box;
	border-left: 1px solid #d5d5d5;
	background: #f0f0f0;
`;

const PanelHead = styled.div`
	display: flex;
	align-items: center;
	height: 40px;
	margin-top: 9px;
	padding-left: 14px;
`;

const PanelTitle = styled.div`
	width: 256px;
	font-size: 25.2px;
	font-weight: 300;
	color: ${BLUE};
`;

const PanelMenu = styled.span`
	width: 0;
	height: 0;
	border: 5.5px solid transparent;
	border-bottom: 0;
	border-top: 6px solid #666;
`;

const PanelClose = styled.span`
	display: flex;
	margin-left: 38px;
`;

const PanelTabs = styled.div`
	position: relative;
	display: flex;
	align-items: center;
	gap: 10px;
	height: 40px;
	margin: 7px 15px 0 14px;
	padding: 0 0 17px 1px;
	box-sizing: content-box;
	border-bottom: 1px solid #cfcfcf;
`;

const PanelTab = styled.div<{ $active?: boolean }>`
	display: flex;
	align-items: center;
	justify-content: center;
	width: 40px;
	height: 40px;
	box-sizing: border-box;
	border: 1px solid ${(p) => (p.$active ? '#666' : 'transparent')};
	border-radius: 5px;
	background: ${(p) => (p.$active ? '#fff' : 'transparent')};
`;

const TabNotch = styled.span`
	position: absolute;
	left: 115px;
	bottom: -6px;
	width: 10px;
	height: 10px;
	background: #f0f0f0;
	border-left: 1px solid #cfcfcf;
	border-top: 1px solid #cfcfcf;
	transform: rotate(45deg);
`;

const SectionHead = styled.div`
	display: flex;
	align-items: center;
	gap: 8px;
	height: 20px;
	margin-top: 8px;
	padding-left: 24px;
	font-size: 14.5px;
	font-weight: 600;
	color: #222;
`;

const FormRow = styled.div<{ $mt: number }>`
	display: flex;
	align-items: center;
	justify-content: space-between;
	height: 26px;
	margin-top: ${(p) => p.$mt}px;
	padding: 0 40px 0 42px;
`;

const FieldLabel = styled.span`
	font-size: 14px;
	color: #a2a2a2;
	u {
		text-underline-offset: 2px;
	}
`;

const SelectField = styled.div`
	display: flex;
	align-items: center;
	justify-content: flex-end;
	width: 122px;
	height: 26px;
	padding-right: 6px;
	box-sizing: border-box;
	border: 1px solid #dcdcdc;
	border-radius: 4px;
`;

const SelectCaret = styled.span`
	width: 0;
	height: 0;
	border: 5px solid transparent;
	border-bottom: 0;
	border-top: 5px solid #bbb;
`;

const CheckRow = styled.div<{ $mt: number }>`
	display: flex;
	align-items: center;
	gap: 6px;
	height: 20px;
	margin-top: ${(p) => p.$mt}px;
	padding-left: 42px;
	font-size: 14px;
	color: #b8b8b8;
`;

const Check = styled.span`
	width: 16px;
	height: 16px;
	box-sizing: border-box;
	border: 1px solid #cfcfcf;
	border-radius: 2px;
`;

const Spin = styled.div`
	display: flex;
	align-items: center;
	justify-content: space-between;
	width: 93px;
	height: 26px;
	padding: 0 6px 0 7px;
	box-sizing: border-box;
	border: 1px solid #dcdcdc;
	border-radius: 4px;
	font-size: 13px;
	color: #b8b8b8;
`;

const SpinArrows = styled.span`
	display: flex;
`;

const StatusBar = styled.div`
	display: flex;
	align-items: center;
	flex: none;
	height: 27px;
	padding: 2px 0 0 9px;
	box-sizing: border-box;
	background: #f5f5f5;
	border-bottom: 1px solid #e4e4e4;
	font-size: 12.3px;
	color: #333;
`;

const StatusItem = styled.div<{ $w: number }>`
	display: flex;
	align-items: center;
	flex: none;
	width: ${(p) => p.$w}px;
	white-space: nowrap;
`;

const StatusRight = styled.div`
	display: flex;
	align-items: center;
	height: 100%;
	margin: -2px 0 0 auto;
	padding-right: 10px;
`;

const FocusItem = styled.div`
	display: flex;
	align-items: center;
	gap: 3px;
	width: 69px;
`;

const ViewButton = styled.div<{ $active?: boolean }>`
	display: flex;
	align-items: center;
	justify-content: center;
	width: 50px;
	height: 100%;
	background: ${(p) => (p.$active ? '#e0e0e0' : 'transparent')};
`;

const ZoomMark = styled.span<{ $w: number }>`
	width: ${(p) => p.$w}px;
	text-align: center;
	font-size: 17px;
	line-height: 1;
	color: #444;
`;

const ZoomTrack = styled.div`
	position: relative;
	width: 124px;
	height: 1px;
	background: #555;
`;

const ZoomTick = styled.span`
	position: absolute;
	left: 62px;
	top: -3px;
	width: 1px;
	height: 7px;
	background: #555;
`;

const ZoomThumb = styled.span`
	position: absolute;
	left: 72px;
	top: -7px;
	width: 6px;
	height: 14px;
	background: #666;
`;

const ZoomPct = styled.span`
	width: 41px;
	text-align: right;
	color: #555;
`;

const Taskbar = styled.div`
	display: flex;
	align-items: center;
	flex: none;
	height: 60px;
	padding-left: 14px;
	box-sizing: border-box;
	background: #f2f3f3;
`;

const OfficeSvg = styled.svg`
	margin-left: -2px;
`;

const TaskSlot = styled.div<{ $dot?: boolean; $active?: boolean }>`
	position: relative;
	display: flex;
	align-items: center;
	justify-content: center;
	flex: none;
	width: 55px;
	height: 48px;
	&::before {
		content: '';
		display: ${(p) => (p.$active ? 'block' : 'none')};
		position: absolute;
		left: 5px;
		top: 0;
		width: 44px;
		height: 48px;
		border-radius: 5px;
		background: #f9f9f9;
		box-shadow: 2px 0 0 #ececec, 0 1px 2px rgba(0, 0, 0, 0.12);
	}
	& > svg {
		position: relative;
	}
	&::after {
		content: '';
		display: ${(p) => (p.$dot || p.$active ? 'block' : 'none')};
		position: absolute;
		left: 50%;
		bottom: -1px;
		width: ${(p) => (p.$active ? 20 : 8)}px;
		height: 4px;
		transform: translateX(-50%);
		border-radius: 2px;
		background: ${(p) => (p.$active ? '#0b73ce' : '#777')};
	}
`;

const CanvaBadge = styled.div`
	display: flex;
	align-items: center;
	justify-content: center;
	width: 30px;
	height: 30px;
	border-radius: 50%;
	background: linear-gradient(150deg, #1cc4d4, #5a5ee0 55%, #8b3be0);
	color: #fff;
	font-family: "Liberation Serif", serif;
	font-style: italic;
	font-size: 10px;
`;

const Tray = styled.div`
	display: flex;
	align-items: center;
	height: 100%;
	margin-left: auto;
	padding-right: 25px;
	color: #222;
`;

const TraySlot = styled.div<{ $w: number; $ml?: number }>`
	display: flex;
	align-items: center;
	justify-content: center;
	width: ${(p) => p.$w}px;
	margin-left: ${(p) => p.$ml ?? 0}px;
`;

const LangBlock = styled.div`
	width: 44px;
	text-align: center;
	font-size: 14px;
	line-height: 21px;
`;

const Clock = styled.div`
	display: flex;
	flex-direction: column;
	align-items: flex-end;
	width: 90px;
	font-size: 14px;
	line-height: 21px;
`;

const NotifyBadge = styled.div`
	display: flex;
	align-items: center;
	justify-content: center;
	width: 20px;
	height: 20px;
	margin-left: 10px;
	border-radius: 50%;
	background: #0078d4;
	color: #fff;
	font-size: 13px;
`;
